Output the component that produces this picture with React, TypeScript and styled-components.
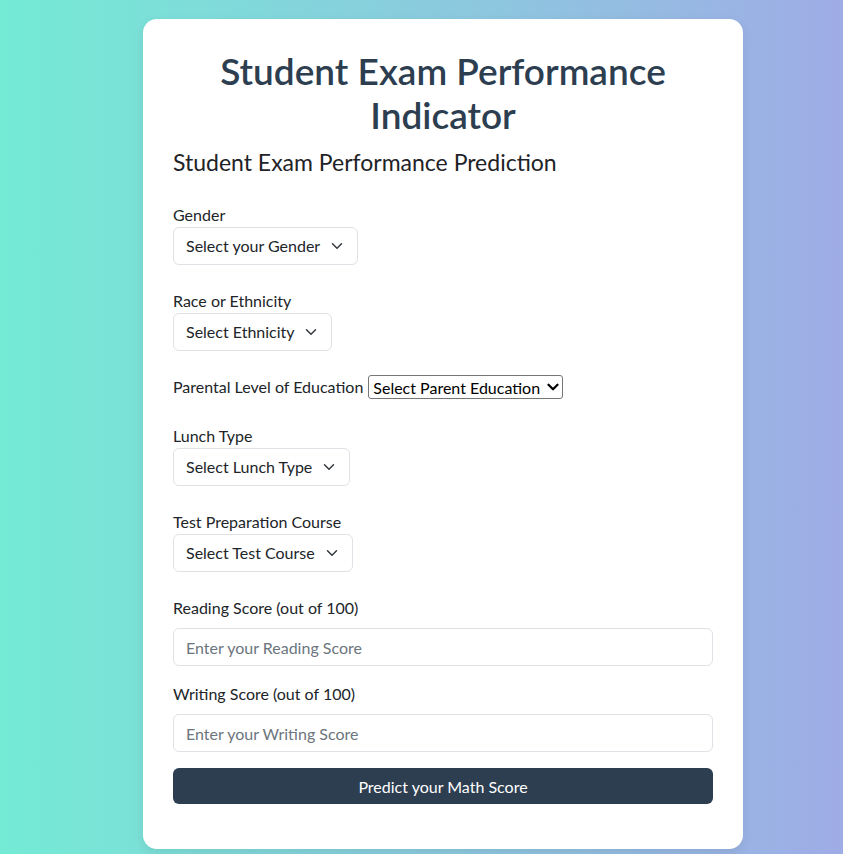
import styled, { createGlobalStyle } from "styled-components";

const GlobalStyle = createGlobalStyle`
  html, body {
    margin: 0;
    padding: 0;
  }
  body {
    font-family: Lato, "Open Sans", sans-serif;
    color: #212529;
  }
  * {
    box-sizing: border-box;
  }
`;

function Chevron({ bold }: { bold?: boolean }) {
  return (
    <ChevronIcon $bold={bold} viewBox="0 0 16 16" aria-hidden="true">
      <path
        d="m2 5 6 6 6-6"
        fill="none"
        stroke={bold ? "#000" : "#343a40"}
        strokeWidth={bold ? 3 : 2}
        strokeLinecap="round"
        strokeLinejoin="round"
      />
    </ChevronIcon>
  );
}

function SelectField({ label, placeholder }: { label: string; placeholder: string }) {
  return (
    <Field>
      <Label>{label}</Label>
      <SelectWrap>
        <Select defaultValue="">
          <option value="" disabled>
            {placeholder}
          </option>
        </Select>
        <Chevron />
      </SelectWrap>
    </Field>
  );
}

function ScoreField({ label, placeholder }: { label: string; placeholder: string }) {
  return (
    <ScoreGroup>
      <Label $spaced>{label}</Label>
      <Input type="number" placeholder={placeholder} />
    </ScoreGroup>
  );
}

export default function App() {
  return (
    <Page>
      <GlobalStyle />
      <Card>
        <Title>Student Exam Performance Indicator</Title>
        <Subtitle>Student Exam Performance Prediction</Subtitle>
        <Form onSubmit={(e) => e.preventDefault()}>
          <SelectField label="Gender" placeholder="Select your Gender" />
          <SelectField label="Race or Ethnicity" placeholder="Select Ethnicity" />
          <InlineField>
            <Label>Parental Level of Education</Label>
            <SelectWrap>
              <NativeSelect defaultValue="">
                <option value="" disabled>
                  Select Parent Education
                </option>
              </NativeSelect>
              <Chevron bold />
            </SelectWrap>
          </InlineField>
          <SelectField label="Lunch Type" placeholder="Select Lunch Type" />
          <SelectField label="Test Preparation Course" placeholder="Select Test Course" />
          <ScoreField label="Reading Score (out of 100)" placeholder="Enter your Reading Score" />
          <ScoreField label="Writing Score (out of 100)" placeholder="Enter your Writing Score" />
          <Button type="submit">Predict your Math Score</Button>
        </Form>
      </Card>
    </Page>
  );
}

const Page = styled.div`
  min-height: 100vh;
  background: linear-gradient(to right, #74ebd5, #9face6);
  padding: 19px 0 5px 143px;
`;

const Card = styled.div`
  width: 600px;
  background: #fff;
  border-radius: 14px;
  padding: 30px 30px 45px;
  box-shadow: 0 4px 12px rgba(0, 0, 0, 0.08);
`;

const Title = styled.h1`
  margin: 0 0 12px;
  text-align: center;
  font-size: 37px;
  line-height: 44px;
  font-weight: 600;
  color: #2c3e50;
`;

const Subtitle = styled.h2`
  margin: 0 0 28px;
  font-size: 23px;
  line-height: 26px;
  font-weight: 400;
  color: #1f2327;
`;

const Form = styled.form`
  display: flex;
  flex-direction: column;
`;

const Field = styled.div`
  display: flex;
  flex-direction: column;
  align-items: flex-start;
  margin-bottom: 24px;
`;

const InlineField = styled.div`
  display: flex;
  align-items: center;
  gap: 5px;
  margin: 0 0 25px;
`;

const ScoreGroup = styled.div`
  display: flex;
  flex-direction: column;
  margin-bottom: 16px;
`;

const Label = styled.label<{ $spaced?: boolean }>`
  font-size: 16px;
  line-height: 24px;
  color: #212529;
  margin-bottom: ${(p) => (p.$spaced ? "8px" : "0")};
`;

const SelectWrap = styled.div`
  position: relative;
  display: inline-flex;
`;

const ChevronIcon = styled.svg<{ $bold?: boolean }>`
  position: absolute;
  top: 50%;
  right: ${(p) => (p.$bold ? "4px" : "13px")};
  width: ${(p) => (p.$bold ? "12px" : "16px")};
  height: 12px;
  transform: translateY(-50%);
  pointer-events: none;
`;

const Select = styled.select`
  appearance: none;
  height: 38px;
  padding: 6px 36px 6px 12px;
  font-family: inherit;
  font-size: 16px;
  line-height: 24px;
  color: #212529;
  background: #fff;
  border: 1px solid #dee2e6;
  border-radius: 6px;
`;

const NativeSelect = styled.select`
  appearance: none;
  height: 24px;
  padding: 0 22px 0 4px;
  font-family: inherit;
  font-size: 16px;
  color: #000;
  background: #fff;
  border: 1px solid #767676;
  border-radius: 3px;
`;

const Input = styled.input`
  width: 100%;
  height: 38px;
  padding: 6px 12px;
  font-family: inherit;
  font-size: 16px;
  line-height: 24px;
  color: #212529;
  border: 1px solid #dee2e6;
  border-radius: 6px;
  appearance: textfield;

  &::placeholder {
    color: #6c757d;
  }
`;

const Button = styled.button`
  width: 100%;
  height: 36px;
  font-family: inherit;
  font-size: 16px;
  color: #fff;
  background: #2c3e50;
  border: none;
  border-radius: 6px;
  cursor: pointer;
`;
